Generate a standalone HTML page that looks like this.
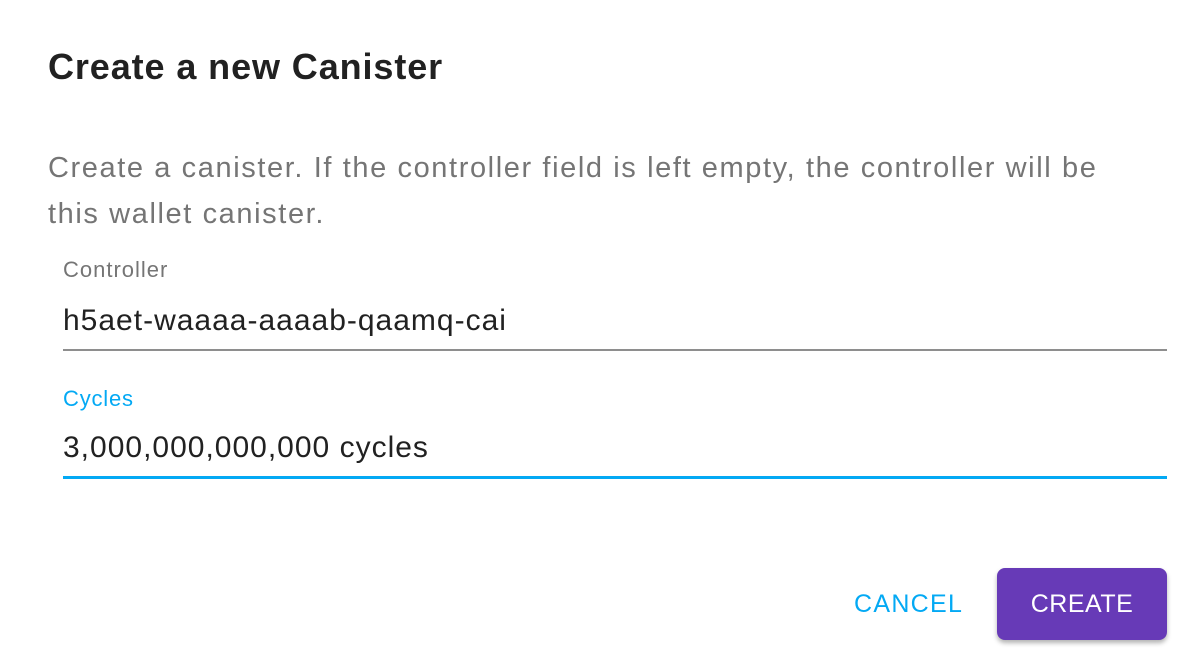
<!DOCTYPE html>
<html><head><meta charset="utf-8"><style>
html,body{margin:0;padding:0;background:#fff;width:1198px;height:670px;overflow:hidden;font-family:"Liberation Sans",Arial,sans-serif;}
.a{position:absolute;white-space:nowrap;line-height:1;}
</style></head><body>
<div class="a" style="left:48px;top:49px;font-size:36px;font-weight:bold;color:#212121;letter-spacing:0.9px;">Create a new Canister</div>
<div class="a" style="left:48px;top:145px;font-size:29px;color:#757575;line-height:46px;white-space:normal;width:1065px;letter-spacing:1.6px;">Create a canister. If the controller field is left empty, the controller will be this wallet canister.</div>
<div class="a" style="left:63px;top:259px;font-size:22px;color:#757575;letter-spacing:1px;">Controller</div>
<div class="a" style="left:63px;top:306px;font-size:30px;color:#212121;letter-spacing:1px;">h5aet-waaaa-aaaab-qaamq-cai</div>
<div class="a" style="left:63px;top:349px;width:1104px;height:2px;background:#8e8e8e;"></div>
<div class="a" style="left:63px;top:388px;font-size:22px;color:#03a9f4;letter-spacing:0.8px;">Cycles</div>
<div class="a" style="left:63px;top:433px;font-size:30px;color:#212121;letter-spacing:1px;">3,000,000,000,000 cycles</div>
<div class="a" style="left:63px;top:476px;width:1104px;height:3px;background:#03a9f4;"></div>
<div class="a" style="left:854px;top:592px;font-size:25px;color:#03a9f4;letter-spacing:1.3px;">CANCEL</div>
<div class="a" style="left:997px;top:568px;width:170px;height:72px;background:#673ab7;border-radius:8px;box-shadow:0 3px 5px rgba(0,0,0,0.3);color:#fff;font-size:25px;text-align:center;line-height:72px;letter-spacing:0.5px;">CREATE</div>
</body></html>
